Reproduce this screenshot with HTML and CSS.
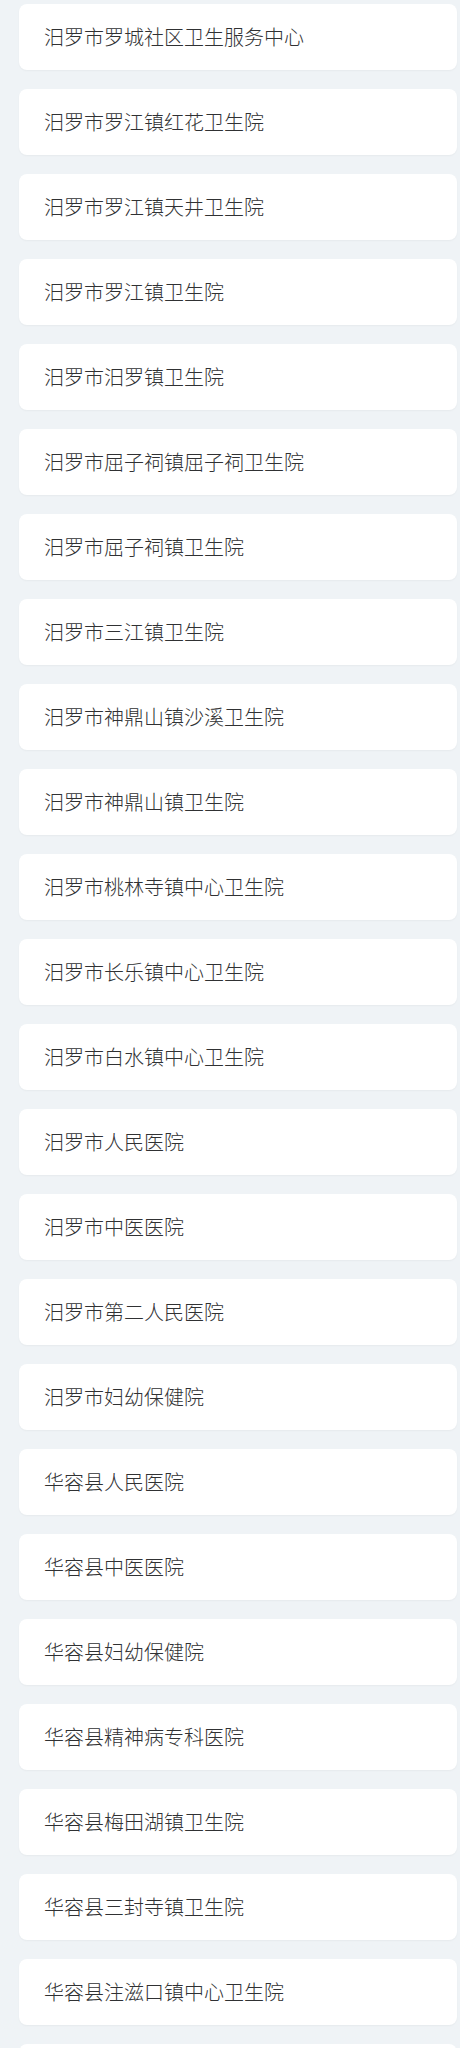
FILE: index.html
```html
<!DOCTYPE html>
<html lang="zh-CN">
<head>
<meta charset="utf-8">
<title>医院列表</title>
<link rel="stylesheet" href="styles.css">
</head>
<body>
<ul class="list">
  <li class="card">汨罗市罗城社区卫生服务中心</li>
  <li class="card">汨罗市罗江镇红花卫生院</li>
  <li class="card">汨罗市罗江镇天井卫生院</li>
  <li class="card">汨罗市罗江镇卫生院</li>
  <li class="card">汨罗市汨罗镇卫生院</li>
  <li class="card">汨罗市屈子祠镇屈子祠卫生院</li>
  <li class="card">汨罗市屈子祠镇卫生院</li>
  <li class="card">汨罗市三江镇卫生院</li>
  <li class="card">汨罗市神鼎山镇沙溪卫生院</li>
  <li class="card">汨罗市神鼎山镇卫生院</li>
  <li class="card">汨罗市桃林寺镇中心卫生院</li>
  <li class="card">汨罗市长乐镇中心卫生院</li>
  <li class="card">汨罗市白水镇中心卫生院</li>
  <li class="card">汨罗市人民医院</li>
  <li class="card">汨罗市中医医院</li>
  <li class="card">汨罗市第二人民医院</li>
  <li class="card">汨罗市妇幼保健院</li>
  <li class="card">华容县人民医院</li>
  <li class="card">华容县中医医院</li>
  <li class="card">华容县妇幼保健院</li>
  <li class="card">华容县精神病专科医院</li>
  <li class="card">华容县梅田湖镇卫生院</li>
  <li class="card">华容县三封寺镇卫生院</li>
  <li class="card">华容县注滋口镇中心卫生院</li>
  <li class="card"></li>
</ul>
</body>
</html>
```
FILE: styles.css
```css
html, body {
  margin: 0;
  padding: 0;
  background: #eff3f6;
}
.list {
  list-style: none;
  margin: 0;
  padding: 4px 3px 0 19px;
  display: flex;
  flex-direction: column;
  gap: 19px;
}
.card {
  height: 66px;
  box-sizing: border-box;
  background: #ffffff;
  border-radius: 8px;
  box-shadow: 0 1px 2px rgba(0, 0, 0, 0.04);
  padding-left: 25px;
  display: flex;
  align-items: center;
  font-family: "Noto Sans CJK SC", "Noto Sans", sans-serif;
  font-size: 20px;
  font-weight: 300;
  color: #303133;
  line-height: 1;
}
```
